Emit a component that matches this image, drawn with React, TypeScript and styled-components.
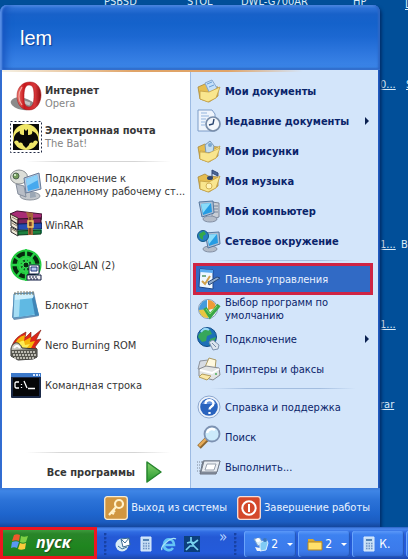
import React from "react";
import styled, { createGlobalStyle, css } from "styled-components";

const GlobalStyle = createGlobalStyle`
  * { box-sizing: border-box; }
  html, body { margin: 0; padding: 0; background: #014f99; }
  body { font-family: "DejaVu Sans Condensed", "DejaVu Sans", sans-serif; font-size: 11px; line-height: 13px; }
  button { font: inherit; border: 0; margin: 0; padding: 0; background: none; color: inherit; text-align: left; cursor: pointer; }
  svg { display: block; flex: none; }
`;

const Desktop = styled.div`
  position: relative;
  display: flex;
  flex-direction: column;
  min-height: 100vh;
  padding-top: 5px;
  overflow: hidden;
  background: #014f99;
`;

const Shortcut = styled.a<{ $x: number; $y: number; $plain?: boolean }>`
  position: absolute;
  left: ${(p) => p.$x}px;
  top: ${(p) => p.$y}px;
  color: #dcecf8;
  white-space: nowrap;
  text-decoration: ${(p) => (p.$plain ? "none" : "underline")};
`;

const StartMenu = styled.nav`
  position: relative;
  display: flex;
  flex-direction: column;
  width: 100%;
  max-width: 380px;
  padding: 0 2px;
  background: linear-gradient(90deg, #2a5cb8, #3f7be0 1px, #2461cb 2px, #2461cb calc(100% - 2px), #16469f);
  border-radius: 7px 7px 0 0;
  box-shadow: 2px 2px 3px #00306e;
`;

const Header = styled.header`
  display: flex;
  align-items: center;
  height: 65px;
  margin: 0 -2px;
  padding: 0 20px;
  border-radius: 7px 7px 0 0;
  color: #fff;
  text-shadow: 1px 1px 1px #0b3d94;
  background: linear-gradient(180deg, #5b97ec 0, #2f74d8 3px, #1861c9 9px, #1462cb 18px, #1c68d2 32px, #3079e0 50px, #3b85e7 62px, #2b62bd 65px);
  box-shadow: inset 2px 0 2px #5a90e6, inset 9px 0 9px -4px #1550bb, inset -2px 0 2px #2d67c5;
`;

const UserName = styled.span`
  font-family: "Liberation Sans", Arial, sans-serif;
  font-size: 20px;
  line-height: 24px;
`;

const Body = styled.div`
  display: grid;
  grid-template-columns: 188px 1fr;
  background: #fff;
`;

const AccentLine = styled.div`
  grid-column: 1 / -1;
  height: 2px;
  background: linear-gradient(90deg, #f5f1e5, #e0a468 35%, #e0a468 60%, #d3e5fa 80%);
`;

const Programs = styled.section`
  display: flex;
  flex-direction: column;
  padding: 5px 3px 0 8px;
  background: #fff;
  color: #363636;
`;

const Places = styled.section`
  display: flex;
  flex-direction: column;
  padding: 4px 6px 6px 3px;
  border-left: 1px solid #9dbbe3;
  background: #d3e5fa;
  color: #0a246a;
`;

const ProgramItem = styled.button`
  display: flex;
  align-items: center;
  gap: 3px;
  height: 40px;
`;

const Label = styled.span<{ $bold?: boolean }>`
  display: block;
  white-space: pre-line;
  ${(p) =>
    p.$bold &&
    css`
      font-weight: bold;
    `}
`;

const Sub = styled.span`
  display: block;
  color: #858585;
`;

const Rule = styled.hr<{ $tone: string }>`
  width: 82%;
  height: 1px;
  margin: 4px auto 3px;
  border: 0;
  background: linear-gradient(90deg, transparent, ${(p) => p.$tone} 25%, ${(p) => p.$tone} 75%, transparent);
`;

const PlaceItem = styled.button<{ $active?: boolean }>`
  display: flex;
  align-items: center;
  gap: 4px;
  height: 30px;
  padding: 0 3px;
  ${(p) =>
    p.$active &&
    css`
      color: #eaf2ff;
      background: #316ac5;
      outline: 3px solid #cf2444;
      outline-offset: -2px;
    `}
`;

const Arrow = styled.span`
  width: 0;
  height: 0;
  margin-left: auto;
  border: 4px solid transparent;
  border-left-color: #0a2050;
  border-right-width: 0;
`;

const AllPrograms = styled.button`
  display: flex;
  align-items: center;
  justify-content: flex-end;
  gap: 10px;
  height: 32px;
  padding-right: 24px;
  font-weight: bold;
`;

const Spacer = styled.div`
  flex: 1;
`;

const Footer = styled.footer`
  display: flex;
  align-items: center;
  justify-content: flex-end;
  gap: 10px;
  height: 39px;
  margin: 0 -2px;
  padding: 0 10px 0 0;
  color: #eaf3ff;
  background: linear-gradient(180deg, #3b79d8 0, #3e85e6 3px, #2c73d8 12px, #1e65cd 26px, #1b5cc0 34px, #14479d);
`;

const FooterButton = styled.button`
  display: flex;
  align-items: center;
  gap: 3px;
  white-space: nowrap;
`;

const Taskbar = styled.div`
  position: relative;
  display: flex;
  align-items: stretch;
  height: 32px;
  margin-top: auto;
  color: #fff;
  background: linear-gradient(180deg, #2b62c4 0, #4d8bf0 2px, #2f6be2 5px, #2459d5 10px, #245bdb 26px, #1c47ad);
`;

const StartButton = styled.button`
  display: flex;
  align-items: center;
  gap: 7px;
  width: 97px;
  padding: 0 0 2px 8px;
  border: 3px solid #ee1620;
  color: #fff;
  font-family: "Open Sans", "Noto Sans", sans-serif;
  font-size: 16px;
  line-height: 20px;
  font-style: italic;
  font-weight: bold;
  text-shadow: 1px 1px 1px #1d4b1d;
  background: linear-gradient(180deg, #3c9a3c, #298529 4px, #1f861f 16px, #207a20);
`;

const QuickLaunch = styled.div`
  display: flex;
  align-items: center;
  gap: 7px;
  padding: 2px 0 0 7px;
`;

const QuickButton = styled.button`
  width: 16px;
  height: 16px;
`;

const MoreButton = styled.button`
  align-self: flex-start;
  margin-top: 2px;
  padding-left: 12px;
  font-size: 15px;
  color: #b9d5ff;
`;

const Grip = styled.span`
  width: 4px;
  height: 22px;
  background: radial-gradient(circle at 1px 1px, #1741a4 1px, transparent 2px) 0 0 / 4px 4px;
`;

const Tasks = styled.div`
  display: flex;
  flex: 1;
  gap: 2px;
  padding: 4px 0 2px 6px;
  overflow: hidden;
`;

const TaskButton = styled.button`
  display: flex;
  flex: none;
  align-items: center;
  gap: 2px;
  width: 52px;
  padding-left: 9px;
  border-radius: 3px;
  font-size: 12px;
  white-space: nowrap;
  background: linear-gradient(180deg, #5b98f8, #3d81f0 4px, #3b7aeb 20px, #3169d4);
  box-shadow: inset 1px 0 0 #6aa4fb, inset -1px -1px 1px #2455b5;
`;

const Drop = styled.span`
  margin-left: 7px;
  border: 3px solid transparent;
  border-top-color: #fff;
  border-bottom-width: 0;
`;

/* ---------- program icons ---------- */

const OperaIcon = () => (
  <svg width="32" height="32" viewBox="0 0 32 32">
    <defs>
      <linearGradient id="opera" x1="0" x2="1">
        <stop offset="0" stopColor="#f07a70" />
        <stop offset=".3" stopColor="#c9181c" />
        <stop offset=".75" stopColor="#d8373a" />
        <stop offset="1" stopColor="#8f0d10" />
      </linearGradient>
    </defs>
    <path d="M1 20c2-4 9-5 16-2 5 2 9 5 9 8-5 4-14 4-20 1-4-2-6-5-5-7z" fill="#8b8b8b" />
    <path d="M11 20l9 3" stroke="#c5c5c5" strokeWidth="3" />
    <path fillRule="evenodd" fill="url(#opera)" stroke="#a11519" strokeWidth=".5" d="M20 1c7 0 11 6 11 13s-4 15-12 15S7 23 7 15 12 1 20 1zm-1 3c-4 0-5 5-5 12 0 6 1 10 5 10s5-5 5-12c0-6-1-10-5-10z" />
    <path d="M12 6c-4 6-4 13 0 18" fill="none" stroke="#f3a7a0" strokeWidth="1.2" />
  </svg>
);

const BatIcon = () => (
  <svg width="32" height="32" viewBox="0 0 32 32">
    <rect x=".5" y=".5" width="31" height="31" fill="#fff" stroke="#222b45" strokeDasharray="2 2" />
    <rect x="3" y="3" width="26" height="26" fill="#0b0b08" />
    <circle cx="16" cy="16" r="13" fill="#f0e768" />
    <path d="M4 16c1-3 3-5 6-6-1 3 1 4 4 4l0-6 2 2 2-2v6c3 0 5-1 4-4 3 1 5 3 6 6v5c-2-2-4-2-5 1-2-1-4 0-4 2l-3 3-3-3c0-2-2-3-4-2-1-3-3-3-5-1z" fill="#090906" />
  </svg>
);

const RemoteIcon = () => (
  <svg width="32" height="32" viewBox="0 0 32 32">
    <ellipse cx="20" cy="27" rx="10" ry="4" fill="#c3c7cc" stroke="#8d949e" />
    <path d="M6 15l8 2 2 11-8-3z" fill="#b8bdc6" stroke="#858e9c" />
    <ellipse cx="9" cy="8" rx="8.5" ry="7" fill="#dcded8" stroke="#8b8f92" />
    <circle cx="6" cy="7" r="3" fill="#769d5b" stroke="#4c6550" />
    <circle cx="5" cy="6" r="1" fill="#e7ffe0" />
    <path d="M14 9l15-5 2 16-15 4z" fill="#b6c8dd" stroke="#687b99" />
    <path d="M16 10l11-4 2 13-11 3z" fill="#46a9ee" />
    <path d="M16 10l11-4 1 5-11 6z" fill="#8bd2fa" />
    <path d="M20 24l5-1 1 5-6 1z" fill="#9ba7b5" />
  </svg>
);

const RarIcon = () => (
  <svg width="32" height="32" viewBox="0 0 32 32">
    <path d="M0 5L7 2l25 3-1 6-23-1z" fill="#a92b75" stroke="#421130" />
    <path d="M0 5l8 4v6l-7-4z" fill="#ece4d2" stroke="#3b2c20" />
    <path d="M8 10l23-1v6l-23 1z" fill="#7c245d" stroke="#2d0e22" />
    <path d="M1 11l7 5v5l-7-4zM1 18l7 4v5l-7-4z" fill="#efe9d8" stroke="#303030" />
    <path d="M8 15l24-1v6l-24 1z" fill="#254cb2" stroke="#101e50" />
    <path d="M8 21l24-1v4l-24 1z" fill="#47b2a0" />
    <path d="M8 22l23-1v4l-23 1z" fill="#1d8140" stroke="#0b3a1c" />
    <path d="M2 8l5 3M2 14l5 3M2 20l5 3" stroke="#8a7a67" />
    <path d="M16 3l7 1v22h-5V9z" fill="#a4643c" />
    <path d="M20 8v17" stroke="#482411" />
    <rect x="18" y="12" width="5" height="6" fill="none" stroke="#f4cc62" strokeWidth="1.5" />
  </svg>
);

const LanIcon = () => (
  <svg width="32" height="32" viewBox="0 0 32 32">
    <circle cx="16" cy="16" r="15.5" fill="#20c83c" />
    <circle cx="16" cy="16" r="11.5" fill="none" stroke="#07290e" strokeWidth="4" />
    <circle cx="16" cy="16" r="6.5" fill="#123f1b" stroke="#34d64f" strokeWidth="2" />
    <path d="M4 7l24 18M7 27L25 4M16 0v32M1 16h30" stroke="#28d348" strokeWidth="2.3" />
    <circle cx="16" cy="16" r="3" fill="#082c10" stroke="#40e05a" />
    <path d="M19 16h10v9H19z" fill="#fff" stroke="#111a42" />
    <path d="M21 18h6v4h-6z" fill="#b7c8ef" stroke="#1a3274" />
    <path d="M17 26h14v5H17z" fill="#eee" stroke="#111a42" />
    <path d="M19 28h9M20 30h9" stroke="#111a42" strokeDasharray="2 1" />
  </svg>
);

const NoteIcon = () => (
  <svg width="32" height="32" viewBox="0 0 32 32">
    <path d="M4 4l20-1 5 24-5 1-20 3-2-3z" fill="#6f94b7" />
    <path d="M4 5l19-1 4 22-9 1-15 2z" fill="#a5ddf4" stroke="#5791bc" />
    <path d="M10 10l13-2 4 17-18 3z" fill="#60b9e3" />
    <path d="M5 5h18l1 4L5 11z" fill="#cdeffc" />
    <path d="M24 7l5 19-4 1-3-17z" fill="#3f86b8" />
    <path d="M5 3v3M8 2v4M11 2v4M14 2v4M17 2v4M20 2v4M23 2v4" stroke="#827e68" />
  </svg>
);

const NeroIcon = () => (
  <svg width="32" height="32" viewBox="0 0 32 32">
    <path d="M2 17C5 8 11 6 16 3l-1 6 6-6v6l10-8-5 10 5-1-6 8 2 2-5 5H8z" fill="#de2619" stroke="#7c1a0d" strokeWidth=".6" />
    <path d="M4 18C7 8 12 7 15 6l-1 6 7-4-1 5 5-1-5 9H5z" fill="#f5b50b" />
    <path d="M6 18c2-5 6-7 8-6l1 4 5-1-4 5H6z" fill="#ffec54" />
    <path d="M1 20c1-7 8-9 11-1l15 1v8l-4 2-15 1-7-4z" fill="#c9c9c1" stroke="#333" />
    <path d="M1 21l26-1v8l-4 2-14 1-8-4z" fill="#56564f" />
    <path d="M2 23h24M3 26h23M4 29h20" stroke="#dddcd2" strokeWidth="1.5" strokeDasharray="2 1" />
    <path d="M4 19c2-3 4-3 6 0" stroke="#fff" strokeWidth="2" fill="none" />
  </svg>
);

const CmdIcon = () => (
  <svg width="32" height="32" viewBox="0 0 32 32">
    <rect x="1" y="4" width="30" height="25" rx="1" fill="#1a2846" />
    <path d="M1 4h30v4H1z" fill="#3c79ca" />
    <path d="M23 5h2v2h-2zM26 5h2v2h-2zM29 5h1v2h-1z" fill="#d9e8ff" />
    <path d="M3 9h26v18H3z" fill="#050608" />
    <path d="M9 13H6l-1 1v4l1 1h3M11.500 15v1M11.500 18v1M14 12l3 7M18 19.500h7" fill="none" stroke="#fff" strokeWidth="1.300" />
  </svg>
);

/* ---------- place icons ---------- */

const FolderBase = () => (
  <>
    <path d="M1 8l7-3 3 2 10 1v9l-9 6-9-3z" fill="#e5bd50" stroke="#a8883a" strokeWidth=".8" />
    <path d="M3 12l9 1 11-6-4 12-8 4-8-3z" fill="#f9e68e" stroke="#c19d42" strokeWidth=".8" />
  </>
);

const DocsIcon = () => (
  <svg width="24" height="24" viewBox="0 0 24 24">
    <path d="M1 8l7-3 3 2 10 1v9l-9 6-9-3z" fill="#e5bd50" stroke="#a8883a" strokeWidth=".8" />
    <path d="M8 4l7-3 5 8-7 6z" fill="#c5e0fa" stroke="#86a7cf" />
    <path d="M10 5l5-2M12 8l5-2" stroke="#689ed6" />
    <path d="M3 12l9 1 11-5-4 11-8 4-8-3z" fill="#f9e68e" stroke="#c19d42" strokeWidth=".8" />
  </svg>
);

const RecentIcon = () => (
  <svg width="24" height="24" viewBox="0 0 24 24">
    <path d="M1 1h14l3 4v17H1z" fill="#eef4fc" stroke="#7d9cc7" />
    <path d="M4 4h6M4 7h8M4 10h5M4 13h4M4 16h4" stroke="#93b5df" />
    <circle cx="16" cy="15" r="7" fill="#f4f7fb" stroke="#788da9" strokeWidth="1.7" />
    <path d="M17 10l-1 5-4 1" stroke="#28436e" fill="none" strokeWidth="1.4" />
  </svg>
);

const PicturesIcon = () => (
  <svg width="24" height="24" viewBox="0 0 24 24">
    <FolderBase />
    <path d="M8 6l5-4 4 5-1 6-7 1z" fill="#c5def1" stroke="#7697b8" />
    <circle cx="13" cy="6" r="2" fill="#7ba7d0" />
    <path d="M3 13l9 1 11-5-4 10-8 4-8-3z" fill="#f9e68e" stroke="#c19d42" strokeWidth=".6" />
  </svg>
);

const MusicIcon = () => (
  <svg width="24" height="24" viewBox="0 0 24 24">
    <FolderBase />
    <path d="M15 1v8M15 1l6 3v3l-6-3" stroke="#324b79" fill="#4b6897" />
    <ellipse cx="13" cy="9" rx="3" ry="2" fill="#304770" />
    <circle cx="12" cy="17" r="3" fill="#fff4b9" stroke="#d3b257" />
  </svg>
);

const ScreenIcon = ({ globe = false }: { globe?: boolean }) => (
  <svg width="24" height="24" viewBox="0 0 24 24">
    {!globe && <path d="M15 3l7 1v14l-7 2z" fill="#c8ced6" stroke="#7e899b" />}
    {!globe && <path d="M17 7h4M17 10h4M17 13h4" stroke="#78869b" />}
    <ellipse cx="13" cy="20" rx="7" ry="3" fill="#b4bcc8" stroke="#8490a4" />
    <g transform={globe ? "translate(6 1)" : undefined}>
      <path d="M2 3l14-1 1 12-12 4z" fill="#aebfd3" stroke="#56779e" />
      <path d="M4 5l10-1 1 9-9 3z" fill="#259ce3" />
      <path d="M4 5l10-1-8 10z" fill="#89dcfa" />
    </g>
    {globe && (
      <>
        <circle cx="6" cy="7" r="5.5" fill="#267dc1" stroke="#155a86" />
        <path d="M2 5l5-3 2 3-3 2v4l-3-2z" fill="#34a848" />
      </>
    )}
  </svg>
);

const PanelIcon = () => (
  <svg width="24" height="24" viewBox="0 0 24 24">
    <path d="M3 2l13 1v19L2 20z" fill="#eff7ff" stroke="#1c4489" />
    <path d="M3 2l13 1v3L3 5z" fill="#5aaaf0" />
    <path d="M5 14l3 3 5-8" fill="none" stroke="#d1a14c" strokeWidth="2" />
    <path d="M5 9h4" stroke="#79ad8b" strokeWidth="2" />
    <path d="M11 15l9-5 3 1-3 2-8 5z" fill="#8fa9cb" stroke="#274a7e" />
  </svg>
);

const DefaultsIcon = () => (
  <svg width="24" height="24" viewBox="0 0 24 24">
    <circle cx="11" cy="12" r="9.5" fill="#eef3f8" stroke="#8198b6" />
    <path d="M10 3v17C5 19 2 16 2 12s4-9 8-9z" fill="#459bdb" />
    <path d="M11 3c4 0 8 3 8 8l-8 2z" fill="#ee9b37" />
    <path d="M2 13l9-1v9c-5 0-8-3-9-8z" fill="#e8c641" />
    <path d="M8 11l5 8L22 8" fill="none" stroke="#3aa746" strokeWidth="4" />
    <path d="M9 12l4 5 7-8" fill="none" stroke="#8bdd6d" />
  </svg>
);

const ConnectIcon = () => (
  <svg width="24" height="24" viewBox="0 0 24 24">
    <circle cx="10" cy="10" r="9.5" fill="#1d70b8" stroke="#104b88" />
    <path d="M2 7l6-5 5 1 2 4-5 2-1 5-4 1-4-5zM13 12l6-2-2 6-5 2z" fill="#36a75b" />
    <path d="M4 5c2-3 5-4 8-2" stroke="#95d7f5" fill="none" strokeWidth="2" />
    <path d="M12 15l4-2 6 5-1 4-5 1z" fill="#dbe4ee" stroke="#7e91ad" />
    <path d="M15 16l4 4" stroke="#768aa7" />
  </svg>
);

const PrinterIcon = () => (
  <svg width="24" height="24" viewBox="0 0 24 24">
    <path d="M1 12l2-8 8-1 2 9z" fill="#d7dce3" stroke="#8d939c" />
    <path d="M8 10L12 1l7 2-1 9z" fill="#fff9df" stroke="#aa9a65" />
    <path d="M2 12l7-3 13 2 1 7-7 5-14-4z" fill="#e2e4e4" stroke="#878b91" />
    <path d="M3 13l12 3 7-4" fill="none" stroke="#fff" strokeWidth="2" />
    <path d="M5 17l9 2-4 4-8-3z" fill="#fbe8a5" stroke="#b39e5d" />
    <circle cx="19" cy="17" r="1" fill="#4ab05a" />
  </svg>
);

const HelpIcon = () => (
  <svg width="24" height="24" viewBox="0 0 24 24">
    <circle cx="12" cy="12" r="11" fill="#edf3fb" stroke="#8ca7cf" />
    <circle cx="12" cy="12" r="8.8" fill="#2963be" />
    <path d="M5 9c2-5 11-7 14 0z" fill="#6594df" />
    <path d="M8.5 9c0-5 8-5 8-.5 0 3-4 3-4 6M12.5 17v2" fill="none" stroke="#fff" strokeWidth="2.3" />
  </svg>
);

const SearchIcon = () => (
  <svg width="24" height="24" viewBox="0 0 24 24">
    <path d="M10 14l-8 8" stroke="#8a6531" strokeWidth="5" />
    <path d="M10 13l-8 8" stroke="#e5aa57" strokeWidth="2.5" />
    <circle cx="15" cy="9" r="7.5" fill="#cceafa" stroke="#7d92b2" strokeWidth="1.8" />
    <path d="M10 8c1-4 5-5 8-3" stroke="#fff" fill="none" strokeWidth="2.5" />
  </svg>
);

const RunIcon = () => (
  <svg width="24" height="24" viewBox="0 0 24 24">
    <path d="M6 6h17l-4 13H3z" fill="#8d96a4" stroke="#69717f" />
    <path d="M7 6h16l-3 11H4z" fill="#e9edf2" stroke="#747d8b" />
    <path d="M10 9h9l-2 6H8z" fill="#fff" stroke="#98a1ae" />
    <path d="M0 7h6M0 10h5M0 13h4M0 16h3" stroke="#7d8898" strokeDasharray="1 1" />
  </svg>
);

/* ---------- small icons ---------- */

const PlayIcon = () => (
  <svg width="18" height="24" viewBox="0 0 18 24">
    <defs>
      <linearGradient id="play" x2="0" y2="1">
        <stop stopColor="#86d26e" />
        <stop offset="1" stopColor="#24982d" />
      </linearGradient>
    </defs>
    <path d="M2 2l14 10L2 22z" fill="url(#play)" stroke="#26852d" strokeWidth="1.5" strokeLinejoin="round" />
  </svg>
);

const KeyIcon = () => (
  <svg width="24" height="24" viewBox="0 0 24 24">
    <rect x=".7" y=".7" width="22.6" height="22.6" rx="2.5" fill="#d09640" stroke="#f9ecd0" strokeWidth="1.3" />
    <circle cx="15" cy="8" r="4" fill="none" stroke="#fff1c9" strokeWidth="2.2" />
    <path d="M12 11l-7 8M7 16l3 2M9 14l2 2" stroke="#fff1c9" strokeWidth="2.2" />
  </svg>
);

const PowerIcon = () => (
  <svg width="24" height="24" viewBox="0 0 24 24">
    <rect x=".7" y=".7" width="22.6" height="22.6" rx="2.5" fill="#d4482b" stroke="#f9ddd3" strokeWidth="1.3" />
    <circle cx="12" cy="12" r="6.7" fill="none" stroke="#fff" strokeWidth="2" />
    <path d="M12 8v8" stroke="#fff" strokeWidth="2" />
  </svg>
);

const FlagIcon = () => (
  <svg width="18" height="18" viewBox="0 0 18 18">
    <path d="M3 2c2-1 4-1 6 0L8 8C6 7 4 7 1 8z" fill="#ee5a2c" />
    <path d="M10 3c2 1 4 1 7 0l-2 6c-2 1-4 1-6 0z" fill="#7ed045" />
    <path d="M1 9c3-1 5-1 7 0l-2 6c-2-1-4-1-6 0z" fill="#5a97f2" />
    <path d="M9 10c2 1 4 1 6 0l-1 6c-3 1-5 1-7 0z" fill="#fbcb3b" />
  </svg>
);

const MailIcon = () => (
  <svg width="16" height="16" viewBox="0 0 16 16">
    <circle cx="7" cy="9" r="6.500" fill="#d9edf5" />
    <path d="M6 3l8-1 1 7-7 2z" fill="#fff" stroke="#3b6b91" />
    <path d="M6 3l4 4 4-5M3 10l4 3 5-2" fill="none" stroke="#3d7298" />
  </svg>
);

const CalcIcon = () => (
  <svg width="16" height="16" viewBox="0 0 16 16">
    <path d="M3 1h10v14H3z" fill="#c6def4" stroke="#dcecff" />
    <path d="M5 3h6v2H5z" fill="#5683b4" />
    <path d="M5 7.5h7M5 10h7M5 12.5h7" stroke="#6f93c4" strokeWidth="1.4" strokeDasharray="1.5 1" />
  </svg>
);

const IeIcon = () => (
  <svg width="16" height="16" viewBox="0 0 16 16">
    <path d="M3 9h10c0-7-9-8-10-1-1 6 6 8 9 4" fill="none" stroke="#64c4f5" strokeWidth="2.6" />
    <path d="M1 14C-1 11 10 0 15 3" fill="none" stroke="#a9e3f7" strokeWidth="1.4" />
  </svg>
);

const RunnerIcon = () => (
  <svg width="16" height="16" viewBox="0 0 16 16">
    <path d="M0 0h16v16H0z" fill="#0c3f7d" />
    <path d="M7 1v5l3 4 4 4M10 10H6l-4 4M3 7l4-1 3 1 4-3" fill="none" stroke="#79d4f0" strokeWidth="1.7" />
  </svg>
);

const PeersIcon = () => (
  <svg width="16" height="16" viewBox="0 0 16 16">
    <path d="M1 3l6-1 3 5-5 3z" fill="#d6edfc" stroke="#799fca" />
    <path d="M7 7l6-4 2 4-2 7-6 1z" fill="#80caf4" stroke="#d7edff" />
    <circle cx="5" cy="4" r="2" fill="#fff" />
    <circle cx="12" cy="4" r="2" fill="#3c75bb" />
    <path d="M2 11l5 1 1 3H4z" fill="#f1f5fb" />
  </svg>
);

const SmallFolderIcon = () => (
  <svg width="16" height="16" viewBox="0 0 16 16">
    <path d="M1 3h5l2 2h7v9H1z" fill="#dca92f" />
    <path d="M1 6h14v8H1z" fill="#ffe06b" stroke="#ad8428" />
  </svg>
);

interface Program {
  label: string;
  sub?: string;
  icon: React.ReactNode;
}

interface Place {
  label: string;
  icon: React.ReactNode;
  bold?: boolean;
  arrow?: boolean;
  active?: boolean;
}

const pinned: Program[] = [
  { label: "Интернет", sub: "Opera", icon: <OperaIcon /> },
  { label: "Электронная почта", sub: "The Bat!", icon: <BatIcon /> },
];

const recent: Program[] = [
  { label: "Подключение к\nудаленному рабочему ст...", icon: <RemoteIcon /> },
  { label: "WinRAR", icon: <RarIcon /> },
  { label: "Look@LAN (2)", icon: <LanIcon /> },
  { label: "Блокнот", icon: <NoteIcon /> },
  { label: "Nero Burning ROM", icon: <NeroIcon /> },
  { label: "Командная строка", icon: <CmdIcon /> },
];

const placeGroups: Place[][] = [
  [
    { label: "Мои документы", icon: <DocsIcon />, bold: true },
    { label: "Недавние документы", icon: <RecentIcon />, bold: true, arrow: true },
    { label: "Мои рисунки", icon: <PicturesIcon />, bold: true },
    { label: "Моя музыка", icon: <MusicIcon />, bold: true },
    { label: "Мой компьютер", icon: <ScreenIcon />, bold: true },
    { label: "Сетевое окружение", icon: <ScreenIcon globe />, bold: true },
  ],
  [
    { label: "Панель управления", icon: <PanelIcon />, active: true },
    { label: "Выбор программ по\nумолчанию", icon: <DefaultsIcon /> },
    { label: "Подключение", icon: <ConnectIcon />, arrow: true },
    { label: "Принтеры и факсы", icon: <PrinterIcon /> },
  ],
  [
    { label: "Справка и поддержка", icon: <HelpIcon /> },
    { label: "Поиск", icon: <SearchIcon /> },
    { label: "Выполнить...", icon: <RunIcon /> },
  ],
];

const shortcuts = [
  { text: "PSBSD", x: 104, y: -5, plain: true },
  { text: "STOL", x: 187, y: -5, plain: true },
  { text: "DWL-G700AR", x: 241, y: -5, plain: true },
  { text: "HP", x: 353, y: -5, plain: true },
  { text: "L", x: 405, y: -2 },
  { text: "0...", x: 380, y: 78 },
  { text: "S", x: 406, y: 78 },
  { text: "1...", x: 380, y: 238 },
  { text: "B", x: 401, y: 238, plain: true },
  { text: "1...", x: 380, y: 318 },
  { text: "rar", x: 380, y: 398 },
];

export default function App() {
  return (
    <>
      <GlobalStyle />
      <Desktop>
        {shortcuts.map((s, i) => (
          <Shortcut key={i} href="#" $x={s.x} $y={s.y} $plain={s.plain}>
            {s.text}
          </Shortcut>
        ))}
        <StartMenu>
          <Header>
            <UserName>lem</UserName>
          </Header>
          <Body>
            <AccentLine />
            <Programs>
              {pinned.map((p) => (
                <ProgramItem key={p.label}>
                  {p.icon}
                  <span>
                    <Label $bold>{p.label}</Label>
                    <Sub>{p.sub}</Sub>
                  </span>
                </ProgramItem>
              ))}
              <Rule $tone="#d5d5d5" />
              {recent.map((p) => (
                <ProgramItem key={p.label}>
                  {p.icon}
                  <Label>{p.label}</Label>
                </ProgramItem>
              ))}
              <Spacer />
              <Rule $tone="#d5d5d5" />
              <AllPrograms>
                Все программы
                <PlayIcon />
              </AllPrograms>
            </Programs>
            <Places>
              {placeGroups.map((group, g) => (
                <React.Fragment key={g}>
                  {g > 0 && <Rule $tone="#a3bddf" />}
                  {group.map((p) => (
                    <PlaceItem key={p.label} $active={p.active}>
                      {p.icon}
                      <Label $bold={p.bold}>{p.label}</Label>
                      {p.arrow && <Arrow />}
                    </PlaceItem>
                  ))}
                </React.Fragment>
              ))}
            </Places>
          </Body>
          <Footer>
            <FooterButton>
              <KeyIcon />
              Выход из системы
            </FooterButton>
            <FooterButton>
              <PowerIcon />
              Завершение работы
            </FooterButton>
          </Footer>
        </StartMenu>
        <Taskbar>
          <StartButton>
            <FlagIcon />
            пуск
          </StartButton>
          <QuickLaunch>
            <Grip />
            <QuickButton aria-label="Почта"><MailIcon /></QuickButton>
            <QuickButton aria-label="Калькулятор"><CalcIcon /></QuickButton>
            <QuickButton aria-label="Internet Explorer"><IeIcon /></QuickButton>
            <QuickButton aria-label="Messenger"><RunnerIcon /></QuickButton>
            <MoreButton>»</MoreButton>
            <Grip />
          </QuickLaunch>
          <Tasks>
            <TaskButton><PeersIcon />2<Drop /></TaskButton>
            <TaskButton><SmallFolderIcon />2<Drop /></TaskButton>
            <TaskButton><CalcIcon />К.</TaskButton>
            <TaskButton aria-label="Окно" />
          </Tasks>
        </Taskbar>
      </Desktop>
    </>
  );
}
